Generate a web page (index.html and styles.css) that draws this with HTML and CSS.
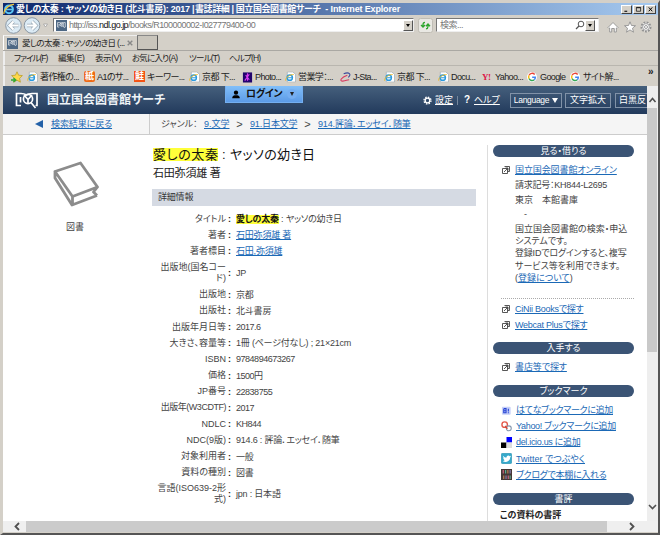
FILE: index.html
```html
<!DOCTYPE html>
<html lang="ja">
<head>
<meta charset="utf-8">
<title>愛しの太秦 : ヤッソの幼き日</title>
<link rel="stylesheet" href="styles.css">
</head>
<body>
<svg width="0" height="0" class="defs">
  <symbol id="ie" viewBox="0 0 12 12"><path d="M2.500 .5h6L11.500 3v8.500h-9z" fill="#fff" stroke="#9aa4ae" stroke-width=".7"/><circle cx="5.200" cy="6.700" r="2.900" fill="none" stroke="#2b9be0" stroke-width="1.600"/><path d="M2.800 6.800h5.200" stroke="#2b9be0" stroke-width="1.200"/><path d="M.7 10C0 6.500 6 3 9.500 3.300" fill="none" stroke="#f2b81e" stroke-width="1"/></symbol>
  <symbol id="ndl" viewBox="0 0 24 18"><path d="M6 14.500H1.500v-12H6c2 0 4 .5 5.500 1.500 1.500-1 3.500-1.500 5.500-1.500h5v12h-1.500M5.500 6v5.500" fill="none" stroke="currentColor" stroke-width="1.700"/><circle cx="13" cy="8" r="4.600" fill="none" stroke="currentColor" stroke-width="1.700"/><path d="M9 4l4 4.500 4-4.500M13 8v4M16 11.500l4.500 5.500" fill="none" stroke="currentColor" stroke-width="1.700"/></symbol>
  <symbol id="goo" viewBox="0 0 12 12"><circle cx="6" cy="6" r="6" fill="#fff"/><path d="M9.200 3A4 4 0 0 0 2.500 4" stroke="#ea4335" stroke-width="1.700" fill="none"/><path d="M2.500 4a4 4 0 0 0 0 4" stroke="#fbbc05" stroke-width="1.700" fill="none"/><path d="M2.500 8a4 4 0 0 0 6.200 1.200" stroke="#34a853" stroke-width="1.700" fill="none"/><path d="M8.700 9.200A4 4 0 0 0 10 6.200H6.200" stroke="#4285f4" stroke-width="1.700" fill="none"/></symbol>
  <symbol id="win" viewBox="0 0 8 8"><path d="M2.500.5h5v5h-2M.5 2.500h5v5h-5zM2 6l3.800-3.800M3.500 2h2.500v2.500" fill="none" stroke="#444" stroke-width=".9"/></symbol>
</svg>
<div class="window">
  <div class="titlebar">
    <svg class="tico" viewBox="0 0 12 12"><circle cx="6" cy="6.300" r="3.900" fill="none" stroke="#5cc6f5" stroke-width="2"/><path d="M3 6.500h7" stroke="#5cc6f5" stroke-width="1.600"/><path d="M1 11C0 7 7 1 11 1.300" fill="none" stroke="#f6c83a" stroke-width="1.300"/></svg>
    <span class="ttext"><span class="t1">愛しの太秦 : ヤッソの幼き日 (北斗書房): 2017 | </span><span class="t2">書誌詳細 | 国立国会図書館サーチ</span><span class="t3"> - Internet Explorer</span></span>
    <span class="wbtns"><svg viewBox="0 0 10 10"><path d="M2 7.500h4" stroke="#000" stroke-width="1.500"/></svg><svg viewBox="0 0 10 10"><path d="M2 2h6v5.500H2zM2 2.500h6" fill="none" stroke="#000"/></svg><svg viewBox="0 0 10 10"><path d="M2.500 2l5 5.500m0-5.500l-5 5.500" stroke="#000" stroke-width="1.400"/></svg></span>
  </div>
  <div class="address">
    <svg class="nav" viewBox="0 0 44 17"><g fill="#dcebf5" stroke="#8b98a5" stroke-width="1"><circle cx="9.500" cy="8.500" r="7.800"/><circle cx="28" cy="8.500" r="7.800"/></g><path d="M14.500 8.500H5.500m4-4l-4 4 4 4M23 8.500h9m-4-4l4 4-4 4" fill="none" stroke="#9aa9b5" stroke-width="3.600"/><path d="M14.500 8.500H5.500m4-4l-4 4 4 4M23 8.500h9m-4-4l4 4-4 4" fill="none" stroke="#fff" stroke-width="2.200"/><path d="M39.500 7h4l-2 3z" fill="#fff" stroke="#999" stroke-width=".7"/></svg>
    <div class="field url"><span class="fav"><svg viewBox="0 0 24 18"><use href="#ndl"/></svg></span><span class="utext">http://iss.<b>ndl.go.jp</b>/books/R100000002-I027779400-00</span><i class="drop"></i></div>
    <svg class="reload" viewBox="0 0 15 15"><rect x=".5" y=".5" width="14" height="14" rx="2" fill="#e9e8e3" stroke="#c0bdb5"/><path d="M5 9V6.500Q5 4.500 7 4.300M3 7l2 2 2-2M10 6v2.500q0 2-2 2.300M8 8.300l2-2.300 2 2.300" fill="none" stroke="#2ca52c" stroke-width="1.300"/></svg>
    <div class="field search"><span class="stext">検索...</span><svg class="mag" viewBox="0 0 10 10"><circle cx="6" cy="4" r="2.800" fill="none" stroke="#555"/><path d="M4 6L1 9" stroke="#555" stroke-width="1.300"/></svg><i class="drop"></i></div>
    <svg class="tools" viewBox="0 0 46 12"><g fill="#fff" stroke="#929292" stroke-width=".9"><path d="M1 6.500l5-5 5 5-1 1-.7-.6V11H7.300V7.500H4.700V11H2.700V6.900L2 7.500z"/><path d="M23 .8l1.500 3.700 4 .2-3 2.500 1 4-3.500-2.300-3.500 2.300 1-4-3-2.500 4-.2z"/><circle cx="39" cy="6" r="4.600" stroke-width="1.800" stroke-dasharray="1.900 1.200"/><circle cx="39" cy="6" r="3.400"/><circle cx="39" cy="6" r="1.500"/></g></svg>
  </div>
  <div class="tabs">
    <div class="tab"><span class="fav"><svg viewBox="0 0 24 18"><use href="#ndl"/></svg></span><span class="tabtext">愛しの太秦 : ヤッソの幼き日 (...</span><svg class="x" viewBox="0 0 6 6"><path d="M.7.7l4.600 4.600m0-4.600L.7 5.300" stroke="#888" stroke-width="1.400"/></svg></div><div class="newtab"></div>
  </div>
  <div class="menu"><span class="m1">ファイル(F)</span><span class="m2">編集(E)</span><span class="m3">表示(V)</span><span class="m4">お気に入り(A)</span><span class="m5">ツール(T)</span><span class="m6">ヘルプ(H)</span></div>
  <div class="favs">
    <svg class="star" viewBox="0 0 12 12"><path d="M6 .8l1.600 3.400 3.800.4-2.800 2.700.8 3.900L6 9.200l-3.400 2 .8-3.900L.6 4.600l3.800-.4z" fill="#ffd84a" stroke="#b59a20" stroke-width=".7"/><path d="M0 9h4m-1.500-2L4.800 9 2.500 11" fill="none" stroke="#2eab35" stroke-width="1.300"/></svg>
    <div class="fi f1"><svg viewBox="0 0 12 12"><use href="#ie"/></svg>著作権の...</div>
    <div class="fi f2"><span class="sq orange">紙</span>A1のサ...</div>
    <div class="fi f3"><span class="sq red">鮭</span>キーワー...</div>
    <div class="fi f4"><svg viewBox="0 0 12 12"><use href="#ie"/></svg>京都 下...</div>
    <div class="fi f5"><svg viewBox="0 0 12 12"><rect x="1" y="1" width="10" height="11" fill="#21036d"/><path d="M3 10l5-7M4 4l4 5M6 2v8" stroke="#d63cf0" stroke-width="1.300"/></svg>Photo...</div>
    <div class="fi f6"><svg viewBox="0 0 12 12"><use href="#ie"/></svg>営業学：...</div>
    <div class="fi f7"><svg viewBox="0 0 12 12"><path d="M4 2.500c6-2.500 9 .5 5 4" fill="none" stroke="#3b4b9b" stroke-width="1.200"/><path d="M8 4C1 6.500-1 10.500 3 10.500s4-1.500 7-1.500" fill="none" stroke="#d83b60" stroke-width="1.200"/></svg>J-Sta...</div>
    <div class="fi f8"><svg viewBox="0 0 12 12"><use href="#ie"/></svg>京都 下...</div>
    <div class="fi f9"><svg viewBox="0 0 12 12"><use href="#ie"/></svg>Docu...</div>
    <div class="fi f10"><span class="yh">Y!</span>Yahoo...</div>
    <div class="fi f11"><svg class="g" viewBox="0 0 12 12"><use href="#goo"/></svg>Google</div>
    <div class="fi f12"><svg class="g" viewBox="0 0 12 12"><use href="#goo"/></svg>サイト解...</div>
    <span class="more">»</span>
  </div>
  <div class="view">
    <div class="page">
      <header>
        <svg class="logo" viewBox="0 0 24 18"><use href="#ndl"/></svg>
        <span class="site">国立国会図書館サーチ</span>
        <div class="login"><svg viewBox="0 0 10 10"><circle cx="5" cy="3" r="2.400"/><path d="M.8 9.300c0-3 2-3.500 4.200-3.500s4.200.5 4.200 3.500z"/></svg><span>ログイン</span><i></i></div>
        <svg class="cog" viewBox="0 0 10 10"><circle cx="5" cy="5" r="2.600" fill="none" stroke="#fff" stroke-width="1.500"/><circle cx="5" cy="5" r="3.900" fill="none" stroke="#fff" stroke-width="1.400" stroke-dasharray="1.700 1.360"/></svg>
        <a class="h1">設定</a><span class="bar"></span><b class="q">?</b><a class="h2">ヘルプ</a>
        <span class="hb b1">Language<i></i></span><span class="hb b2">文字拡大</span><span class="hb b3">白黒反</span>
      </header>
      <nav class="crumbs">
        <div class="back"><i></i><a>検索結果に戻る</a></div>
        <div class="genre"><span class="c0">ジャンル：</span><a class="c1">9.文学</a><em>&gt;</em><a class="c2">91.日本文学</a><em>&gt;</em><a class="c3">914.評論．エッセイ．随筆</a></div>
      </nav>
      <div class="cols">
        <aside class="left">
          <svg viewBox="0 0 46 46"><path d="M2 10.500L27.500 2l17 24L19.500 35.500zM2 10.500v6.500L19 44l25-9.500M19.500 35.500V44M44.500 26l-4 5 3.500 3.500" fill="none" stroke="#8c8c8c" stroke-width="2.800" stroke-linejoin="round"/></svg>
          <span>図書</span>
        </aside>
        <main>
          <h1><mark>愛しの太秦</mark><span class="tt"> : ヤッソの幼き日</span></h1>
          <p class="author">石田弥須雄 著</p>
          <h2>詳細情報</h2>
          <dl>
            <dt>タイトル</dt><dd class="v1"><mark>愛しの太秦</mark> : ヤッソの幼き日</dd>
            <dt>著者</dt><dd><a>石田弥須雄 著</a></dd>
            <dt>著者標目</dt><dd><a>石田,弥須雄</a></dd>
            <dt class="two">出版地(国名コー<br>ド)</dt><dd class="two">JP</dd>
            <dt>出版地</dt><dd>京都</dd>
            <dt>出版社</dt><dd>北斗書房</dd>
            <dt>出版年月日等</dt><dd class="n">2017.6</dd>
            <dt>大きさ、容量等</dt><dd>1冊 (ページ付なし) ; 21×21cm</dd>
            <dt>ISBN</dt><dd class="n">9784894673267</dd>
            <dt>価格</dt><dd class="n">1500円</dd>
            <dt>JP番号</dt><dd class="n">22838755</dd>
            <dt class="n">出版年(W3CDTF)</dt><dd class="n">2017</dd>
            <dt>NDLC</dt><dd class="n">KH844</dd>
            <dt>NDC(9版)</dt><dd>914.6 : 評論．エッセイ．随筆</dd>
            <dt>対象利用者</dt><dd>一般</dd>
            <dt>資料の種別</dt><dd>図書</dd>
            <dt class="two">言語(ISO639-2形<br>式)</dt><dd class="two">jpn : 日本語</dd>
          </dl>
        </main>
        <aside class="right">
          <h3>見る・借りる</h3>
          <div class="see">
            <div class="lk"><svg viewBox="0 0 8 8"><use href="#win"/></svg><a class="on">国立国会図書館オンライン</a></div>
            <p class="call">請求記号：KH844-L2695</p>
            <p>東京　本館書庫</p>
            <p>　-</p>
            <div class="desc">国立国会図書館の検索・申込<br>システムです。<br><span class="tight">登録IDでログインすると、複写</span><br>サービス等を利用できます。<br>(<a>登録について</a>)</div>
          </div>
          <div class="other">
            <div class="lk"><svg viewBox="0 0 8 8"><use href="#win"/></svg><a>CiNii Booksで探す</a></div>
            <div class="lk"><svg viewBox="0 0 8 8"><use href="#win"/></svg><a>Webcat Plusで探す</a></div>
          </div>
          <h3>入手する</h3>
          <div class="shop"><div class="lk"><svg viewBox="0 0 8 8"><use href="#win"/></svg><a class="on">書店等で探す</a></div></div>
          <h3>ブックマーク</h3>
          <div class="marks">
            <div><svg viewBox="0 0 12 12"><rect x="1" y="2" width="9.500" height="8.500" rx="1" fill="#c5cff8"/><path d="M3 4v4.500h2.500V4H3M3 6.200h2.500M8 4v3M8 8v1" stroke="#2744d4" fill="none" stroke-width="1.200"/></svg><a>はてなブックマークに追加</a></div>
            <div><svg viewBox="0 0 12 12"><circle cx="4" cy="4" r="3" fill="#fff" stroke="#e4584a" stroke-width="1.500"/><circle cx="8.500" cy="8" r="2.700" fill="#fff" stroke="#8698ae" stroke-width="1.200"/><path d="M4.500 5.500l2.500 3" stroke="#d54535" stroke-width="1.500"/></svg><a>Yahoo! ブックマークに追加</a></div>
            <div><svg viewBox="0 0 12 12"><path d="M0 0h6v6H0z" fill="#fff"/><path d="M6 0h6v6H6z" fill="#00f"/><path d="M0 6h6v6H0z"/><path d="M6 6h6v6H6z" fill="#ddd"/></svg><a>del.icio.us に追加</a></div>
            <div><svg viewBox="0 0 12 12"><rect x=".3" y=".3" width="11.400" height="11.400" rx="1.500" fill="#35a9cb" stroke="#248aa9" stroke-width=".6"/><path d="M2 3c1.500 1.500 2.500 2 4 2 0-2.500 2.500-3 3.500-1.500L11 3 10 5c0 4-4.500 6-8 4l2-1-2-2h1z" fill="#fff"/></svg><a class="tw">Twitter でつぶやく</a></div>
            <div><svg viewBox="0 0 12 12"><rect width="12" height="12" fill="#443735"/><path d="M2.500 1v4M8 7v4" stroke="#b95c72" stroke-width="1.500"/><path d="M5 1v4M10 7v4" stroke="#5ba88e" stroke-width="1.300"/><path d="M7.500 1v4M3 7v4" stroke="#bc8055" stroke-width="1.300"/><path d="M10 1v4M5.500 7v4" stroke="#847bb0" stroke-width="1.300"/></svg><a>ブクログで本棚に入れる</a></div>
          </div>
          <h3>書評</h3>
          <p class="review">この資料の書評</p>
        </aside>
      </div>
    </div>
    <div class="vs"><svg viewBox="0 0 11 22"><path d="M2.500 16l3-3.500 3 3.500" fill="none" stroke="#505050" stroke-width="1.600"/></svg><i></i><svg viewBox="0 0 11 22"><path d="M2 6l3.500 3.500L9 6" fill="none" stroke="#505050" stroke-width="1.600"/></svg></div>
  </div>
  <div class="hs"><svg viewBox="0 0 23 11"><path d="M16 2l-3.500 3.500L16 9" fill="none" stroke="#505050" stroke-width="1.800"/></svg><i></i><svg class="rt" viewBox="0 0 51 11"><path d="M23 2l3.500 3.500L23 9" fill="none" stroke="#505050" stroke-width="1.800"/></svg></div>
</div>
</body>
</html>
```

FILE: styles.css
```css
* { box-sizing: border-box; }
body { margin: 0; width: 660px; height: 535px; overflow: hidden; background: #d4d0c8; font: 9px/12px "Liberation Sans", "Noto Sans CJK JP", sans-serif; color: #444; font-feature-settings: "palt"; white-space: nowrap; }
i, em { font-style: normal; }
h1, h2, h3, p, dl, dd { margin: 0; font-weight: normal; }
svg { display: block; flex: none; }
.defs { position: absolute; }
a { color: #1b69b6; text-decoration: underline; text-underline-offset: 1px; }
mark { background: #ffff3a; color: #111; }
.window { width: 660px; height: 535px; border: 3px solid #d4d0c8; border-right: 2px solid #555; border-bottom: 2px solid #555; display: flex; flex-direction: column; color: #222; }

.titlebar { height: 12px; flex: none; display: flex; align-items: center; background: linear-gradient(90deg, #0d286c, #a6caf0); color: #fff; font-weight: bold; }
.tico { width: 12px; height: 12px; }
.ttext { margin-left: 1px; flex: 1; display: flex; white-space: pre; }
.t1 { width: 179px; letter-spacing: -0.25px; }
.t2 { width: 128px; letter-spacing: -0.4px; }
.t3 { letter-spacing: -0.15px; }
.wbtns { display: flex; gap: 1px; padding-right: 2px; }
.wbtns svg { width: 11px; height: 9px; background: #d4d0c8; border: 1px solid; border-color: #fff #404040 #404040 #fff; }

.address { height: 20px; flex: none; display: flex; align-items: center; }
.nav { width: 44px; height: 17px; margin-left: 1px; }
.field { height: 14px; background: #fff; border: 1px solid #777; border-right-color: #eee; border-bottom-color: #eee; display: flex; align-items: center; color: #777; }
.url { width: 361px; margin-left: 5px; }
.fav { width: 11px; height: 11px; background: #4c6784; color: #fff; display: flex; align-items: center; justify-content: center; flex: none; margin-left: 2px; }
.fav svg { width: 9px; height: 8px; }
.utext { margin-left: 2px; flex: 1; letter-spacing: -0.55px; }
.utext b { font-weight: normal; color: #111; }
.drop { width: 10px; height: 11px; background: #d4d0c8; border: 1px solid; border-color: #fff #555 #555 #fff; display: flex; align-items: center; justify-content: center; }
.drop::after { content: ""; border: 2.500px solid transparent; border-top: 3px solid #000; border-bottom: 0; }
.reload { width: 15px; height: 15px; margin-left: 4px; }
.search { width: 163px; margin-left: 3px; padding-right: 3px; }
.stext { flex: 1; margin-left: 3px; letter-spacing: -0.5px; }
.mag { width: 10px; height: 10px; }
.tools { width: 46px; height: 12px; margin: 3px 0 0 8px; }

.tabs { height: 16px; flex: none; display: flex; border-bottom: 1px solid #aaa8a3; }
.tab { width: 134px; display: flex; align-items: center; border-left: 1px solid #fff; border-top: 1px solid #eee; }
.tab .fav { margin-left: 3px; }
.tabtext { margin-left: 4px; width: 103px; flex: none; font-size: 8.500px; letter-spacing: -0.6px; }
.x { width: 6px; height: 6px; margin-left: 2px; }
.newtab { width: 21px; height: 15px; background: #c9c5bc; border: 1px solid #666; border-color: #888 #555 #555 #777; }
.menu { height: 15px; flex: none; display: flex; align-items: center; border-bottom: 1px solid #b9b6af; border-left: 2px solid #eee; padding-left: 9px; font-size: 8.500px; letter-spacing: -0.8px; }
.m1 { width: 44px; letter-spacing: -1px; }
.m2 { width: 37px; letter-spacing: -0.4px; }
.m3 { width: 37px; letter-spacing: -0.4px; }
.m4 { width: 57px; }
.m5 { width: 40px; }
.favs { height: 20px; flex: none; display: flex; align-items: center; border-left: 2px solid #eee; padding-top: 1px; }
.star { width: 12px; height: 12px; margin: 0 4px 0 6px; }
.fi { display: flex; align-items: center; flex: none; gap: 2px; letter-spacing: -0.6px; }
.fi > svg { width: 11px; height: 12px; }
.fi > svg.g { width: 10px; height: 10px; margin-right: 1px; }
.f1 { width: 57px; } .f2 { width: 50px; } .f3 { width: 55px; } .f4 { width: 53px; } .f5 { width: 43px; } .f6 { width: 55px; } .f7 { width: 44px; } .f8 { width: 54px; } .f9 { width: 44px; } .f10 { width: 45px; } .f11 { width: 43px; } .f12 { width: 78px; }
.sq { width: 11px; height: 11px; font-size: 9px; line-height: 10px; color: #fff; text-align: center; font-weight: bold; letter-spacing: 0; }
.orange { background: #ef6a16; border-radius: 2px; }
.red { background: #f35315; }
.yh { color: #dd1848; font: bold 9px "Liberation Serif", serif; width: 11px; }
.more { font-weight: bold; font-size: 10px; margin-top: -9px; }

.view { height: 435px; flex: none; display: flex; }
.page { width: 644px; flex: none; background: #fff; overflow: hidden; color: #444; }
header { position: relative; height: 28px; background: linear-gradient(#455f7c, #223a5c); display: flex; align-items: center; color: #fff; }
header > * { flex: none; }
header a { color: #fff; }
.logo { width: 24px; height: 18px; margin-left: 12px; }
.site { font-size: 12px; font-weight: bold; color: #eef3f7; width: 120px; margin-left: 8px; }
.login { position: absolute; left: 222px; top: 0; width: 78px; height: 17px; background: linear-gradient(#82bff9, #5c9be7); border: 1px solid #74aff0; border-top: 0; display: flex; align-items: center; color: #111; font-weight: bold; font-size: 10px; letter-spacing: -0.4px; }
.login svg { width: 10px; height: 9px; margin-left: 5px; }
.login span { margin-left: 5px; width: 37px; }
.login i { width: 10px; height: 10px; margin-left: 4px; border-radius: 5px; background: #75aef1; display: flex; justify-content: center; align-items: center; }
.login i::after { content: ""; border: 2.500px solid transparent; border-top: 4px solid #222; border-bottom: 0; }
.cog { width: 9px; height: 9px; margin-left: 256px; }
.h1 { margin-left: 3px; width: 18px; }
.bar { width: 1px; height: 9px; background: #75879c; margin: 0 6px 0 4px; }
.q { width: 10px; font-size: 10px; }
.h2 { width: 26px; }
.hb { height: 15px; border: 1px solid #8192a8; display: flex; align-items: center; justify-content: center; gap: 3px; line-height: 13px; }
.b1 { width: 52px; margin-left: 10px; font-size: 8.500px; letter-spacing: -0.3px; }
.b1 i { border: 3px solid transparent; border-top: 5px solid #fff; border-bottom: 0; }
.b2 { width: 46px; margin-left: 3px; }
.b3 { width: 46px; margin-left: 4px; justify-content: flex-start; padding-left: 3px; }
.crumbs { height: 21px; display: flex; background: #f5f5f5; border-bottom: 1px solid #ccc; }
.back { width: 147px; border-right: 1px solid #ccc; display: flex; align-items: center; }
.back i { border: 4.500px solid transparent; border-right: 8px solid #2361a8; border-left: 0; margin: 0 8px 0 32px; }
.back a { letter-spacing: -0.1px; }
.genre { display: flex; align-items: center; padding-left: 11px; }
.c0 { width: 43px; }
.c1 { width: 25px; }
.c2 { width: 47px; }
.c2, .c3 { letter-spacing: -0.15px; }
.genre em { width: 21px; text-align: center; font-size: 11px; }
.cols { display: flex; height: 386px; }
.left { width: 149px; display: flex; flex-direction: column; align-items: center; padding-top: 26px; }
.left svg { width: 46px; height: 46px; margin-left: -4px; }
.left span { margin: 14px 0 0 -5px; }
main { width: 324px; padding-top: 12px; }
main h1 { font-size: 13px; line-height: 16px; color: #111; display: flex; white-space: pre; padding-left: 1px; }
main h1 mark { height: 13px; line-height: 13px; margin-top: 1px; width: 65px; letter-spacing: .6px; }
.tt { letter-spacing: .35px; }
.author { font-size: 11px; line-height: 16px; margin-top: 2px; color: #222; padding-left: 1px; letter-spacing: -0.2px; }
main h2 { height: 17px; margin-top: 8px; background: #d5dae3; font-size: 9px; line-height: 17px; padding-left: 6px; color: #333; letter-spacing: -0.2px; }
dl { display: grid; grid-template-columns: 74px 1fr; margin-top: 5px; }
dt, dd { height: 16.200px; display: flex; align-items: center; }
dt { justify-content: flex-end; text-align: right; line-height: 11px; }
dd { letter-spacing: -0.2px; }
dd::before { content: ":"; width: 8px; padding-left: 2px; color: #222; flex: none; font-weight: bold; }
dt.n, dd.n { letter-spacing: -0.48px; }
dt.two, dd.two { height: 27px; }
dd.v1 { white-space: pre; }
dd mark { font-weight: bold; line-height: 9px; }
.right { width: 149px; margin-top: 10px; padding-left: 5px; border-left: 1px solid #ddd; margin-left: 11px; }
.right h3 { width: 141px; height: 12px; border-radius: 6px; background: #3b5475; color: #fff; text-align: center; font-size: 9px; line-height: 12px; }
.lk { display: flex; align-items: center; height: 16px; letter-spacing: -0.25px; }
.lk svg { width: 8px; height: 8px; margin: 0 5px 0 9px; }
.on { letter-spacing: -0.1px; }
.see { height: 141px; padding-top: 5px; }
.see p { margin-left: 22px; height: 14.500px; line-height: 14px; }
.call { letter-spacing: -0.25px; }
.desc { margin-left: 22px; line-height: 12.400px; margin-top: 1px; }
.tight { letter-spacing: -0.2px; }
.other { margin-left: 8px; width: 133px; border-top: 1px dotted #aaa; height: 44px; padding-top: 2px; }
.other .lk svg { margin-left: 1px; }
.shop { height: 31px; padding-top: 5px; }
.marks { height: 96px; padding-top: 5px; }
.marks div { height: 16.200px; display: flex; align-items: center; }
.marks svg { width: 11px; height: 11px; margin: 0 4px 0 8px; }
.marks a { letter-spacing: -0.32px; }
.marks .tw { letter-spacing: 0; }
.review { font-weight: bold; color: #222; margin: 4px 0 0 7px; }
.vs { width: 11px; background: #eee; display: flex; flex-direction: column; }
.vs i { flex: none; height: 244px; background: #c9c9c9; width: 10px; margin-bottom: 147px; }
.vs svg { width: 11px; height: 22px; }
.hs { height: 11px; flex: none; display: flex; background: #efefef; width: 655px; }
.hs i { width: 581px; background: #cbcbcb; }
.hs svg { width: 23px; height: 11px; }
.hs .rt { width: 51px; }
```
